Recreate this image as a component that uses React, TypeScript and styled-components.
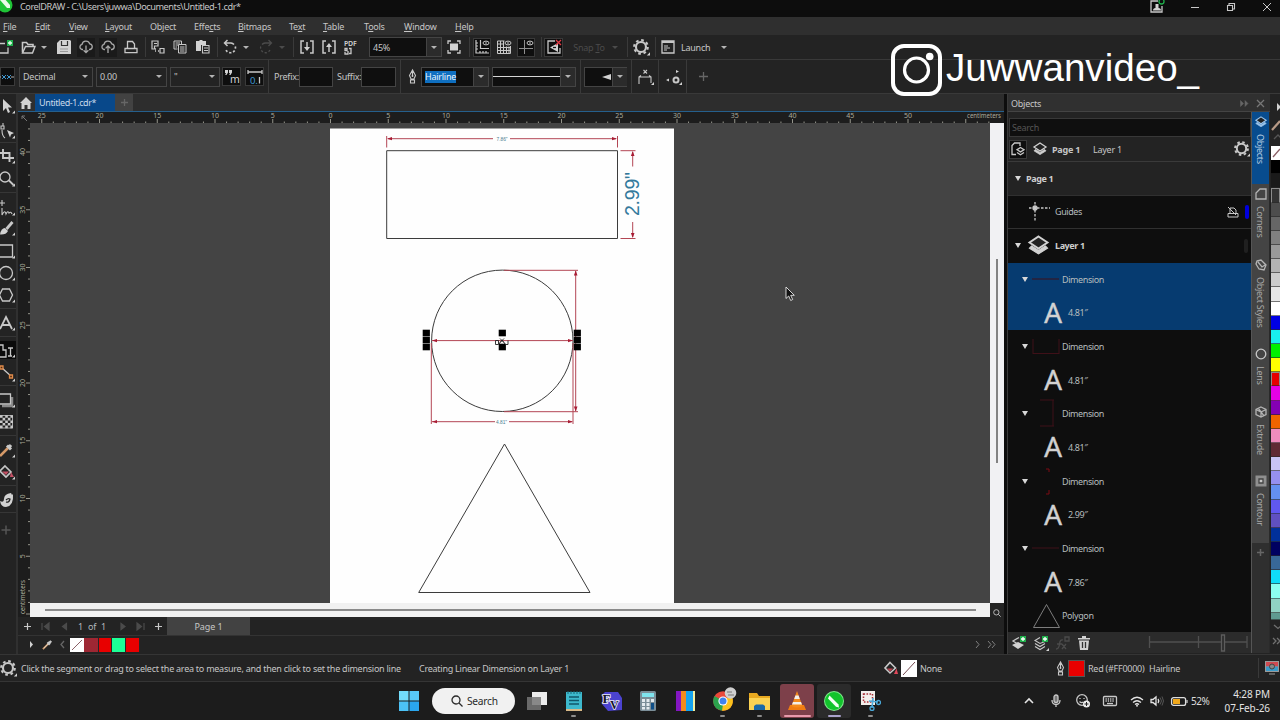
import React from 'react';
import styled, { createGlobalStyle, css } from 'styled-components';

const GlobalStyle = createGlobalStyle`
  * {
    box-sizing: border-box;
  }

  body {
    margin: 0;
    background: #1c1c1c;
    overflow: hidden;
  }
`;

const ui = `'Noto Sans', 'Open Sans', sans-serif`;

const Screen = styled.div`
  position: relative;
  width: 1280px;
  height: 720px;
  overflow: hidden;
  display: flex;
  flex-direction: column;
  background: #232323;
  color: #c6c6c6;
  font-family: ${ui};
  font-size: 9px;
  letter-spacing: -0.25px;
  line-height: 1;
  white-space: nowrap;
`;

const Icon = styled.svg<{ $dim?: boolean }>`
  display: block;
  flex-shrink: 0;
  fill: none;
  stroke: ${({ $dim }) => ($dim ? '#4b4b4b' : '#c8c8c8')};
  stroke-width: 1.3;
  overflow: visible;

  .f {
    fill: ${({ $dim }) => ($dim ? '#4b4b4b' : '#d2d2d2')};
    stroke: none;
  }
`;

/* ---------- title and menu ---------- */

const TitleBar = styled.div`
  height: 17px;
  flex-shrink: 0;
  display: flex;
  align-items: center;
  padding-bottom: 4px;
  background: #0d0d0d;
  font-size: 9.2px;
  letter-spacing: -0.46px;
`;

const AppLogo = styled.svg`
  width: 13px;
  height: 13px;
  margin-right: 7px;
  flex-shrink: 0;
`;

const WindowButtons = styled.div`
  display: flex;
  align-items: center;
  margin-left: auto;
  gap: 28px;
  padding-right: 9px;
`;

const MenuBar = styled.div`
  height: 18px;
  flex-shrink: 0;
  display: flex;
  align-items: center;
  padding: 1px 0 0 3px;
  background: #2f2f2f;
`;

const MenuItem = styled.div<{ $w: number }>`
  width: ${({ $w }) => $w}px;

  u {
    text-underline-offset: 1px;
    text-decoration-thickness: 1px;
  }
`;

/* ---------- toolbars ---------- */

const Toolbar = styled.div<{ $h: number }>`
  height: ${({ $h }) => $h}px;
  flex-shrink: 0;
  display: flex;
  align-items: center;
  background: #232323;
  border-bottom: 1px solid #393939;
`;

const Cell = styled.div<{ $w: number; $ml?: number; $boxed?: boolean; $dim?: boolean }>`
  width: ${({ $w }) => $w}px;
  height: 19px;
  margin-left: ${({ $ml = 0 }) => $ml}px;
  flex-shrink: 0;
  display: flex;
  align-items: center;
  justify-content: center;
  color: ${({ $dim }) => ($dim ? '#4b4b4b' : '#c6c6c6')};
  ${({ $boxed }) => $boxed && css`
    background: #0e0e0e;
    border: 1px solid #3a3a3a;
  `}
`;

const CloudCell = styled(Cell)`
  background: #1a1a1a;
`;

const Separator = styled.i<{ $ml: number; $h?: number }>`
  width: 1px;
  height: ${({ $h = 20 }) => $h}px;
  margin-left: ${({ $ml }) => $ml}px;
  flex-shrink: 0;
  background: #3a3a3a;
`;

const Caret = styled.i<{ $dim?: boolean }>`
  border: 3px solid transparent;
  border-top: 3.5px solid ${({ $dim }) => ($dim ? '#4b4b4b' : '#b4b4b4')};
  border-bottom: 0;
`;

const Label = styled.span<{ $ml?: number; $w?: number }>`
  width: ${({ $w }) => ($w ? `${$w}px` : 'auto')};
  margin-left: ${({ $ml = 0 }) => $ml}px;
  flex-shrink: 0;
`;

const Field = styled.div<{ $w: number; $ml?: number; $dark?: boolean }>`
  width: ${({ $w }) => $w}px;
  height: 20px;
  margin-left: ${({ $ml = 0 }) => $ml}px;
  flex-shrink: 0;
  display: flex;
  align-items: center;
  padding-left: 3px;
  border: 1px solid #444;
  background: ${({ $dark }) => ($dark ? '#0f0f0f' : '#232323')};
`;

const FieldCaret = styled.span<{ $boxed?: boolean }>`
  width: 15px;
  height: 100%;
  margin-left: auto;
  flex-shrink: 0;
  display: flex;
  align-items: center;
  justify-content: center;
  background: ${({ $boxed }) => ($boxed ? '#2b2b2b' : 'transparent')};
  border-left: ${({ $boxed }) => ($boxed ? '1px solid #444' : '0')};
`;

const Selected = styled.span`
  height: 12px;
  line-height: 11px;
  background: #0f6fc0;
  color: #e8f2fb;
`;

const LineSample = styled.span`
  flex: 1;
  height: 1px;
  margin-left: -3px;
  background: #d5d5d5;
`;

/* ---------- workspace ---------- */

const Workspace = styled.div`
  height: 560px;
  flex-shrink: 0;
  display: flex;
`;

const Toolbox = styled.div`
  width: 18px;
  flex-shrink: 0;
  display: flex;
  flex-direction: column;
  border-right: 2px solid #303030;
`;

const Tool = styled.div<{ $mt?: number; $active?: boolean }>`
  height: 18px;
  margin-top: ${({ $mt = 0 }) => $mt}px;
  flex-shrink: 0;
  background: ${({ $active }) => ($active ? '#0b0b0b' : 'transparent')};
`;

const ToolRule = styled.i<{ $mt?: number }>`
  height: 1px;
  margin-top: ${({ $mt = 0 }) => $mt}px;
  flex-shrink: 0;
  background: #363636;
`;

const Document = styled.div`
  width: 986px;
  flex-shrink: 0;
  display: flex;
  flex-direction: column;
`;

const TabStrip = styled.div`
  height: 18px;
  flex-shrink: 0;
  display: flex;
  align-items: center;
  background: #2d2d2d;
  border-bottom: 1px solid #255f8c;
`;

const DocTab = styled.div<{ $w: number; $bg: string }>`
  width: ${({ $w }) => $w}px;
  height: 17px;
  display: flex;
  align-items: center;
  justify-content: center;
  background: ${({ $bg }) => $bg};
  color: #c9d9ea;
  letter-spacing: -0.38px;
`;

const CanvasGrid = styled.div`
  display: grid;
  grid-template: 11px 480px 14px / 12px 960px 14px;
`;

const Ruler = styled.svg`
  display: block;
  overflow: visible;
  background: #1d1d1d;
  font-family: ${ui};
  font-size: 7px;
  letter-spacing: 0;
  fill: #aaaa9c;
`;

const TopRuler = styled(Ruler)`
  grid-column: 1 / 4;
`;

const Canvas = styled.svg`
  display: block;
  background: #444;
  font-family: 'Liberation Sans', Arial, sans-serif;
  letter-spacing: 0;
`;

const ScrollY = styled.div`
  padding: 136px 6px 0;
  background: #f1f1f3;

  i {
    display: block;
    height: 204px;
    width: 2px;
    background: #828282;
  }
`;

const ScrollX = styled.div`
  padding: 6px 14px 0 15px;
  background: #f1f1f1;

  i {
    display: block;
    height: 2px;
    background: #8a8a8a;
  }
`;

const PageBar = styled.div`
  height: 19px;
  flex-shrink: 0;
  display: flex;
  align-items: center;
  border-bottom: 1px solid #333;
`;

const PageCount = styled.span`
  width: 36px;
  margin-left: 2px;
  flex-shrink: 0;
  display: flex;
  justify-content: space-between;
  padding: 0 2px 0 6px;
  color: #b3b9bd;
`;

const PageTab = styled.div`
  width: 83px;
  height: 18px;
  margin-left: 3px;
  display: flex;
  align-items: center;
  justify-content: center;
  background: #424242;
  letter-spacing: -0.1px;
`;

const DocPalette = styled.div`
  height: 17px;
  flex-shrink: 0;
  display: flex;
  align-items: center;
`;

const Swatch = styled.i<{ $bg: string; $w?: number }>`
  width: ${({ $w = 14 }) => $w}px;
  height: 14px;
  margin-top: 1px;
  background: ${({ $bg }) => $bg};
  border-right: 1px solid #262626;
`;

/* ---------- docker ---------- */

const Splitter = styled.div`
  width: 4px;
  flex-shrink: 0;
  background: #0d0d0d;
  border-right: 1px solid #3a3a3a;
`;

const DockerArea = styled.div`
  width: 262px;
  flex-shrink: 0;
  display: flex;
  flex-direction: column;
`;

const DockerHeader = styled.div`
  height: 18px;
  flex-shrink: 0;
  display: flex;
  align-items: center;
  padding: 2px 5px 0 3px;
  background: #303030;
  border-bottom: 1px solid #444;
`;

const DockerBody = styled.div`
  display: flex;
  height: 541px;
`;

const Docker = styled.div`
  width: 243px;
  display: flex;
  flex-direction: column;
`;

const SearchField = styled.div`
  height: 19px;
  margin: 6px 0 0 1px;
  flex-shrink: 0;
  padding: 4px 0 0 2px;
  background: #0f0f0f;
  border: 1px solid #383838;
  color: #555;
`;

const Crumbs = styled.div`
  height: 25px;
  flex-shrink: 0;
  display: flex;
  align-items: center;
  border-bottom: 1px solid #3a3a3a;

  b {
    width: 41px;
    margin-left: 5px;
  }
`;

const Tree = styled.div`
  height: 470px;
  flex-shrink: 0;
  overflow: hidden;
  background: #0e0e0e;
  letter-spacing: -0.4px;
`;

const TreeRow = styled.div<{ $indent: number; $bg?: string; $rule?: boolean }>`
  height: 33.65px;
  display: flex;
  align-items: center;
  padding-left: ${({ $indent }) => $indent}px;
  background: ${({ $bg }) => $bg || 'transparent'};
  border-bottom: 1px solid ${({ $rule }) => ($rule ? '#303030' : 'transparent')};
  color: #b6bdbe;

  b {
    color: #cfcfcf;
  }
`;

const Twist = styled.i`
  border: 3.2px solid transparent;
  border-top: 5px solid #d8d8d8;
  border-bottom: 0;
`;

const Letter = styled.span`
  width: 20px;
  margin: -2px 5px 0 -1px;
  text-align: center;
  font-family: 'Open Sans', sans-serif;
  font-size: 28px;
  line-height: 32px;
  color: #d2d2d2;
  -webkit-text-stroke: 0.5px #d2d2d2;
`;

const ColorMark = styled.i<{ $bg: string }>`
  width: 4px;
  height: 14px;
  border-radius: 2px;
  background: ${({ $bg }) => $bg};
`;

const DockerFooter = styled.div`
  flex: 1;
  display: flex;
  align-items: center;
  padding-left: 3px;
  background: #2b2b2b;
`;

const DockerTabs = styled.div`
  width: 19px;
  display: flex;
  flex-direction: column;
  background: #2f2f2f;
  border-left: 1px solid #555;
  border-right: 1px solid #2a2a2a;
`;

const DockerTab = styled.div<{ $h: number; $top?: number; $active?: boolean }>`
  height: ${({ $h }) => $h}px;
  padding-top: ${({ $top = 5 }) => $top}px;
  flex-shrink: 0;
  display: flex;
  flex-direction: column;
  align-items: center;
  gap: 6px;
  background: ${({ $active }) => ($active ? '#084c8e' : '#444')};
  color: ${({ $active }) => ($active ? '#b5cce2' : '#a9a9a9')};

  span {
    writing-mode: vertical-rl;
    letter-spacing: -0.3px;
  }
`;

const Palette = styled.div`
  width: 10px;
  flex: 1;
  display: flex;
  flex-direction: column;
  overflow: hidden;
  padding-left: 1px;
`;

const PaletteHead = styled.div`
  height: 52px;
  flex-shrink: 0;
`;

const PaletteCell = styled.i<{ $bg: string; $outlined?: boolean; $h?: number }>`
  height: ${({ $h = 14.15 }) => $h}px;
  flex-shrink: 0;
  background: ${({ $bg }) => $bg};
  border: ${({ $outlined }) => ($outlined ? '1px solid #8c8c8c' : '0')};
  border-bottom: 1px solid rgba(40, 40, 40, 0.6);
`;

/* ---------- status and taskbar ---------- */

const StatusBar = styled.div`
  height: 28px;
  flex-shrink: 0;
  display: flex;
  align-items: center;
  border-top: 1px solid #353535;
  border-bottom: 1px solid #353535;
`;

const Chip = styled.i<{ $bg: string; $ml: number }>`
  width: 17px;
  height: 17px;
  margin-left: ${({ $ml }) => $ml}px;
  background: ${({ $bg }) => $bg};
  border: 1px solid #555;
`;

const Taskbar = styled.div`
  height: 38px;
  flex-shrink: 0;
  display: flex;
  align-items: center;
  background: #1c1c1c;
`;

const SearchPill = styled.div`
  width: 83px;
  height: 26px;
  margin-left: 13px;
  flex-shrink: 0;
  display: flex;
  align-items: center;
  gap: 4px;
  padding-left: 19px;
  border-radius: 13px;
  background: #f1f1f1;
  color: #2a2a2a;
  font-size: 10.2px;
`;

const AppSlot = styled.div<{ $w: number; $bg?: string; $mark?: string; $markW?: number }>`
  width: ${({ $w }) => $w}px;
  height: 34px;
  flex-shrink: 0;
  display: flex;
  flex-direction: column;
  align-items: center;
  justify-content: flex-end;
  border-radius: 3px;
  background: ${({ $bg }) => $bg || 'transparent'};

  &::after {
    content: '';
    width: ${({ $markW = 5 }) => $markW}px;
    height: 2px;
    margin: 4px 0 1px;
    border-radius: 1px;
    background: ${({ $mark }) => $mark || 'transparent'};
  }
`;

const Battery = styled.span`
  margin-left: 3px;
  font-size: 10px;
  letter-spacing: -0.5px;
  color: #dcdcdc;
`;

const Clock = styled.div`
  margin-left: auto;
  padding: 1px 10px 0 0;
  font-size: 10px;
  letter-spacing: -0.1px;
  line-height: 13.5px;
  text-align: right;
  color: #e4e4e4;
`;

const Watermark = styled.div`
  position: absolute;
  left: 891px;
  top: 44px;
  display: flex;
  align-items: center;
  gap: 4px;
  color: #fff;
  font-family: 'Liberation Sans', Arial, sans-serif;
  font-size: 38.6px;
  letter-spacing: 0;
  line-height: 46px;

  span {
    margin-top: -4px;
  }
`;

const menus: [string, string, string, number][] = [
  ['', 'F', 'ile', 32],
  ['', 'E', 'dit', 34],
  ['', 'V', 'iew', 36],
  ['', 'L', 'ayout', 45],
  ['Ob', 'j', 'ect', 44],
  ['Effe', 'c', 'ts', 44],
  ['', 'B', 'itmaps', 51],
  ['Te', 'x', 't', 34],
  ['', 'T', 'able', 41],
  ['T', 'o', 'ols', 40],
  ['', 'W', 'indow', 51],
  ['', 'H', 'elp', 30],
];

const paletteColors = [
  '#000000', '#1a1a1a', '#333333', '#4d4d4d', '#666666', '#808080', '#999999', '#b3b3b3',
  '#cccccc', '#e6e6e6', '#ffffff', '#0000e6', '#19f0f0', '#00f000', '#ffff00', '#e60000',
  '#e600e6', '#8400b4', '#f06400', '#f08cbe', '#5f2a34', '#c8c4f5', '#9690f0', '#6490f0',
  '#6058f0', '#6050c0', '#00309a', '#000060', '#386898', '#10dcf8', '#8cfff0', '#90d2c4',
];

// The corner mark that tells a button opens a flyout
const Flyout = ({ x = 13, y = 13 }) => <path className="f" d={`M${x + 3} ${y}v3h-3z`} />;

const Gear = ({ size = 16 }) => (
  <Icon width={size} height={size} viewBox="0 0 16 16">
    <circle cx="7.5" cy="7.5" r="4.7" strokeWidth="2" />
    <circle cx="7.5" cy="7.5" r="6.4" strokeWidth="2" strokeDasharray="2.5 2.527" />
    <Flyout x={13} y={12.5} />
  </Icon>
);

const Layers = ({ size = 14, color = '#d2d2d2' }) => (
  <Icon width={size} height={size} viewBox="0 0 14 14">
    <path d="M1 8.8 7 12.6 13 8.8 11.6 7.4 7 10.4 2.4 7.4z" style={{ fill: color, stroke: color }} strokeWidth=".8" />
    <path d="M7 1 13 5 7 9 1 5z" stroke={color} fill="#222" />
  </Icon>
);

const Magnifier = ({ size = 12, color = '#c8c8c8' }) => (
  <Icon width={size} height={size} viewBox="0 0 12 12">
    <circle cx="5" cy="5" r="4" stroke={color} />
    <path d="M8 8l3.5 3.5" stroke={color} />
  </Icon>
);

const Pen = () => (
  <Icon width="9" height="15" viewBox="0 0 9 15">
    <path d="M4.5 1 1.5 6.5 3 10h3l1.5-3.5zM4.5 1.5v5.5M2.5 11h4v3h-4z" strokeWidth="1.1" />
    <circle cx="4.5" cy="7" r=".9" className="f" />
  </Icon>
);

const Dropper = ({ size = 12 }) => (
  <Icon width={size} height={size} viewBox="0 0 12 12">
    <path d="M1 11 7 5" stroke="#c9976a" strokeWidth="2" />
    <path d="M2 10 7 5" stroke="#e8ddd0" strokeWidth=".8" />
    <path d="M6 3.5 8.6 6.2M8 4.3 10 2.2" strokeWidth="2.6" />
  </Icon>
);

const Bucket = ({ size = 14 }) => (
  <Icon width={size} height={size} viewBox="0 0 14 14">
    <path d="M6 1.5 11.5 7 6 12 1 7z" strokeWidth="1.6" />
    <path d="M3 7.5h6L6 10.5z" fill="#c0404f" stroke="none" />
    <path d="M12.5 7.500l1.500 5.500h-4z" fill="#e0485a" stroke="none" />
  </Icon>
);

const CorelBall = ({ size = 20 }) => (
  <svg width={size} height={size} viewBox="0 0 20 20">
    <circle cx="10" cy="10" r="10" fill="#7fe88c" />
    <circle cx="10" cy="10" r="9" fill="#12c42c" />
    <path d="M5.5 4.5 14.5 13.5l.5 3-3-.8L4 7.5z" fill="#f4fff4" />
  </svg>
);

const Cloud = ({ up = false }) => (
  <Icon width="14" height="14" viewBox="0 0 14 14">
    <path d="M4 9.500H3A2.600 2.600 0 0 1 3 4.400 4 4 0 0 1 10.700 3.800 2.900 2.900 0 0 1 11 9.500H10" stroke="#a8a8a8" />
    <path d={up ? 'M7 13V6M4.6 8.4 7 6l2.4 2.4' : 'M7 5.5v7M4.6 10.3 7 12.7l2.4-2.4'} stroke="#a8a8a8" />
  </Icon>
);

const Eye = () => (
  <>
    <ellipse cx="11" cy="3" rx="3" ry="1.9" strokeWidth="1" />
    <circle cx="11" cy="3" r=".8" className="f" />
  </>
);

const StandardBar = () => (
  <Toolbar $h={25}>
    <Cell $w={14}>
      <Icon width="14" height="16" viewBox="0 0 14 16">
        <path d="M-1 4.500H5M8 8.500v5.500H-1" />
        <path d="M7 1h6v6H7z" fill="#1fb04b" stroke="none" />
        <path d="M10 2v4M8 4H12" stroke="#eafff0" />
      </Icon>
    </Cell>
    <Cell $w={16} $ml={6}>
      <Icon width="15" height="13" viewBox="0 0 15 13">
        <path d="M1.5 11.5V1.5h4l1.5 2h5v2" strokeWidth="1.6" />
        <path d="M1.5 12 4.5 5.5H14L11.5 12z" strokeWidth="1.4" />
      </Icon>
    </Cell>
    <Cell $w={8} $ml={4}><Caret /></Cell>
    <Cell $w={18} $ml={7}>
      <Icon width="14" height="14" viewBox="0 0 14 14">
        <path className="f" d="M3 0h10l1 1v13H0V3z" />
        <path d="M4.500 1v4.500h6V1" stroke="#333" strokeWidth="1.200" />
        <path d="M3 9h8M3 11.500h8" stroke="#999" strokeWidth="1" />
      </Icon>
    </Cell>
    <CloudCell $w={18} $ml={4}><Cloud /></CloudCell>
    <CloudCell $w={18} $ml={4}><Cloud up /></CloudCell>
    <Cell $w={20} $ml={4}>
      <Icon width="14" height="14" viewBox="0 0 14 14">
        <path d="M3.5 8V1.5h5L10.5 4v4M1 8.5h12v4.2H1zM3 8 1 9M11 8l2 1" />
      </Icon>
    </Cell>
    <Separator $ml={4} />
    <Cell $w={18} $ml={3}>
      <Icon width="14" height="14" viewBox="0 0 14 14">
        <path d="M1 1h6v5H3.5v3H1zM3 3.5h3M9 8.5h4V13H9z" strokeWidth="1.2" />
        <path d="M4 11h1M7 11h1M4 9h1" />
      </Icon>
    </Cell>
    <Cell $w={18} $ml={4}>
      <Icon width="14" height="14" viewBox="0 0 14 14">
        <path
          d="M4.5 9H1V1h7.5v3M2.5 3H7M2.5 5H5M2.5 7H4M5.5 4.5H13V13H5.5zM7 7h4.500M7 9h4.500M7 11h4.500"
          strokeWidth="1"
        />
      </Icon>
    </Cell>
    <Cell $w={18} $ml={5}>
      <Icon width="14" height="14" viewBox="0 0 14 14">
        <path className="f" d="M0 1h3l1-1h2l1 1h3v4H5v6H0z" />
        <path d="M6.5 5.5H13V13H6.5zM8 8h4M8 10.500h4" strokeWidth="1.1" />
      </Icon>
    </Cell>
    <Separator $ml={5} />
    <Cell $w={18} $ml={3}>
      <Icon width="14" height="14" viewBox="0 0 14 14">
        <path d="M4.500 0 1.500 3l3 3M1.500 3H8a5 5 0 0 1 3 1.500" strokeWidth="1.500" />
        <path d="M12.300 6.500A5 5 0 0 1 3 10" strokeDasharray="2.200 1.800" strokeWidth="1.700" />
      </Icon>
    </Cell>
    <Cell $w={8} $ml={3}><Caret /></Cell>
    <Cell $w={18} $ml={7}>
      <Icon $dim width="14" height="14" viewBox="0 0 14 14">
        <path d="M9.5 0 12.5 3l-3 3M12.5 3H6A5 5 0 0 0 3 4.5" />
        <path d="M1.700 6.500A5 5 0 0 0 11 10" strokeDasharray="2.200 1.800" />
      </Icon>
    </Cell>
    <Cell $w={8} $ml={3}><Caret $dim /></Cell>
    <Separator $ml={7} />
    <Cell $w={18} $ml={4}>
      <Icon width="14" height="14" viewBox="0 0 14 14">
        <path d="M4 1H1v12h3M10 1h3v12h-3M7 2v6" strokeWidth="1.500" />
        <path className="f" d="M4 7h6l-3 4z" />
      </Icon>
    </Cell>
    <Cell $w={18} $ml={4}>
      <Icon width="14" height="14" viewBox="0 0 14 14">
        <path d="M4 1H1v12h3M10 1h3v12h-3M7 12V6" strokeWidth="1.500" />
        <path className="f" d="M4 7h6L7 3z" />
      </Icon>
    </Cell>
    <Cell $w={20} $ml={3}>
      <Icon width="15" height="15" viewBox="0 0 15 15">
        <text className="f" x="0" y="6" fontSize="7" fontWeight="600">PDF</text>
        <path d="M1 8.500h2v2H1zM5 8.500h2v5H5M1 12v2h3v-3" strokeWidth="1.300" />
      </Icon>
    </Cell>
    <Field $w={73} $ml={8} $dark>
      45%<FieldCaret $boxed><Caret /></FieldCaret>
    </Field>
    <Cell $w={18} $ml={3}>
      <Icon width="14" height="14" viewBox="0 0 14 14">
        <path d="M1 4V1h3M10 1h3v3M13 10v3h-3M4 13H1v-3" />
        <path className="f" d="M3 3.500h8v7H3z" />
      </Icon>
    </Cell>
    <Separator $ml={6} />
    <Cell $w={18} $ml={3} $boxed>
      <Icon width="14" height="14" viewBox="0 0 14 14">
        <path d="M1 0v13h13M5.500 0v8.500H14M1 3h2M1 6h2M1 9h2M5 13v-2M8 13v-2M11 13v-2" strokeWidth="1.200" />
        <Eye />
      </Icon>
    </Cell>
    <Cell $w={18} $ml={4}>
      <Icon width="14" height="14" viewBox="0 0 14 14">
        <path
          d="M.5 13.500V1h7M.5 13.500h13V6M3.500 1v12M6.500 1v12M9.500 6.500v7M12 6.500v7M.5 4h6M.5 7.500H13M.5 10.500H13"
          strokeWidth="1"
        />
        <Eye />
      </Icon>
    </Cell>
    <Cell $w={18} $ml={4} $boxed>
      <Icon width="14" height="14" viewBox="0 0 14 14">
        <path d="M0 8.500h14M5.500 0v14" strokeWidth="1" stroke="#8e8e8e" />
        <Eye />
      </Icon>
    </Cell>
    <Separator $ml={6} />
    <Cell $w={19} $ml={2} $boxed>
      <Icon width="14" height="14" viewBox="0 0 14 14">
        <path d="M8 1H1v12h12V8" />
        <path className="f" d="M3 7.500 11 3v9z" />
        <path d="M6 7.500h3" stroke="#111" />
        <path d="M9 0l5 5M14 0 9 5" stroke="#e03a45" />
      </Icon>
    </Cell>
    <Cell $w={34} $ml={9} $dim><span>Snap <u>T</u>o</span></Cell>
    <Cell $w={8} $ml={5}><Caret $dim /></Cell>
    <Separator $ml={8} />
    <Cell $w={18} $ml={4}><Gear size={17} /></Cell>
    <Separator $ml={5} />
    <Cell $w={16} $ml={4}>
      <Icon width="14" height="14" viewBox="0 0 14 14">
        <path d="M1 1h12v12H1z" />
        <path d="M1 2h12" strokeWidth="2" />
        <path d="M3 6h4M3 8h6M3 10h3" strokeWidth="1.200" />
      </Icon>
    </Cell>
    <Label $ml={5} $w={30}>Launch</Label>
    <Cell $w={8} $ml={9}><Caret /></Cell>
  </Toolbar>
);

const PropertyBar = () => (
  <Toolbar $h={34}>
    <Cell $w={15} $boxed>
      <Icon width="15" height="8" viewBox="0 0 15 8">
        <path d="M2 2l4 4M6 2 2 6M7 2l4 4M11 2 7 6" stroke="#3f97d0" strokeWidth="1" />
        <path d="M-1 4h2M11 4h3" strokeWidth=".9" />
      </Icon>
    </Cell>
    <Field $w={74} $ml={4}>Decimal<FieldCaret><Caret /></FieldCaret></Field>
    <Field $w={71} $ml={3}>0.00<FieldCaret><Caret /></FieldCaret></Field>
    <Field $w={50} $ml={3}>"<FieldCaret><Caret /></FieldCaret></Field>
    <Cell $w={19} $ml={2} $boxed>
      <Icon width="16" height="16" viewBox="0 0 16 16">
        <path className="f" d="M1 1h3v2.500L2.500 6H1.200L2 4H1zM5 1h3v2.500L6.500 6H5.200L6 4H5z" />
        <text className="f" x="6" y="14" fontSize="10.500">m</text>
      </Icon>
    </Cell>
    <Cell $w={19} $ml={4} $boxed>
      <Icon width="16" height="16" viewBox="0 0 16 16">
        <path d="M1 1v4M15 1v4M1 3h14" />
        <text x="3" y="14.500" fontSize="9.500" style={{ fill: '#3f97d0', stroke: 'none' }}>0.</text>
        <path d="M12.500 8v6.500" />
      </Icon>
    </Cell>
    <Separator $ml={4} $h={33} />
    <Label $ml={5} $w={24}>Prefix:</Label>
    <Field $w={34} $ml={1} $dark />
    <Label $ml={4} $w={24}>Suffix:</Label>
    <Field $w={35} $dark />
    <Separator $ml={4} $h={33} />
    <Cell $w={16} $ml={3}><Pen /></Cell>
    <Field $w={68} $ml={1} $dark>
      <Selected>Hairline</Selected>
      <FieldCaret $boxed><Caret /></FieldCaret>
    </Field>
    <Field $w={84} $ml={3} $dark>
      <LineSample />
      <FieldCaret $boxed><Caret /></FieldCaret>
    </Field>
    <Separator $ml={4} $h={33} />
    <Field $w={43} $ml={3} $dark>
      <Icon width="24" height="6" viewBox="0 0 24 6"><path className="f" d="M14 3 23 0v6z" /></Icon>
      <FieldCaret $boxed><Caret /></FieldCaret>
    </Field>
    <Separator $ml={4} $h={33} />
    <Cell $w={19} $ml={4}>
      <Icon width="16" height="16" viewBox="0 0 16 16">
        <path d="M5.500 1l3.500 3.500M9 1 5.500 4.500M1 15V8h12v6M1 8l2-1.500M13 8l-2-1.500" strokeWidth="1.100" />
        <Flyout x={13} y={13} />
      </Icon>
    </Cell>
    <Separator $ml={3} $h={33} />
    <Cell $w={19} $ml={5}>
      <Icon width="16" height="16" viewBox="0 0 16 16">
        <path className="f" d="M10 1l3 1.500L10 4zM0 11l3-1.500v3z" />
        <circle cx="10" cy="11" r="2.500" strokeWidth="2" />
        <Flyout x={13} y={13} />
      </Icon>
    </Cell>
    <Separator $ml={3} $h={33} />
    <Cell $w={11} $ml={11}>
      <Icon $dim width="9" height="9" viewBox="0 0 9 9">
        <path d="M4.500 0v9M0 4.500h9" stroke="#666" strokeWidth="1.300" />
      </Icon>
    </Cell>
  </Toolbar>
);

const ToolIcon = ({ children, mt, active, fly = true }: {
  children: React.ReactNode; mt?: number; active?: boolean; fly?: boolean;
}) => (
  <Tool $mt={mt} $active={active}>
    <Icon width="16" height="18" viewBox="0 0 16 18">
      {children}
      {fly && <Flyout x={12} y={13.5} />}
    </Icon>
  </Tool>
);

const ToolboxPanel = () => (
  <Toolbox>
    <ToolIcon mt={3}><path className="f" d="M3 2v12l3-3 2 5 2-1-2-4.500h4z" /></ToolIcon>
    <ToolIcon mt={7}>
      <path d="M3 1v3M1 4h3v3H1zM2 8q0 6 3 8" strokeWidth="1.100" />
      <path className="f" d="M7 8l7 3-3 1.500-1 3z" />
    </ToolIcon>
    <ToolRule $mt={2} />
    <ToolIcon mt={4}><path d="M3 2v9h11M0 6h9.500v9" strokeWidth="1.900" /></ToolIcon>
    <ToolIcon mt={5}><circle cx="5" cy="7" r="5" /><path d="M9 10.500l4.500 4.500" strokeWidth="1.800" /></ToolIcon>
    <ToolRule $mt={4} />
    <ToolIcon mt={6}>
      <path d="M2 1v6M-1 4h6M2 9v7q3-6 4-1 2-4 3-1 2-2 3 1" strokeWidth="1.100" />
    </ToolIcon>
    <ToolIcon mt={2}>
      <path d="M6.500 10 12.500 3" strokeWidth="2.800" />
      <path className="f" d="M0 15.500q1-6.500 5-6.500l3 3q-2 4-8 3.500z" />
    </ToolIcon>
    <ToolIcon mt={5}><path d="M-1 3h13.500v12H-1z" /></ToolIcon>
    <ToolIcon mt={4}><circle cx="6" cy="9" r="6.500" /></ToolIcon>
    <ToolIcon mt={4}><path d="M2.500 3h7l3 6-3 6h-7l-3-6z" /></ToolIcon>
    <ToolRule $mt={4} />
    <ToolIcon mt={5}><path d="M0 15 6 3l6 12M2.300 11h7.400" strokeWidth="1.800" /></ToolIcon>
    <ToolRule $mt={4} />
    <ToolIcon mt={4} active>
      <path d="M-1 4h4v5h3v7H-1M8 7h5M10.500 7v8M8 15h4" />
    </ToolIcon>
    <ToolIcon mt={6}>
      <path d="M2 3l10 9" />
      <path d="M0 1h3v3H0zM9.500 10h3v3h-3z" stroke="#e08a4a" fill="#4a2c15" />
    </ToolIcon>
    <ToolRule $mt={2} />
    <ToolIcon mt={5}>
      <path d="M12 6v9H2" stroke="#8a8a8a" strokeWidth="2.500" />
      <path d="M-1 3h11.500v10H-1z" fill="#232323" />
    </ToolIcon>
    <ToolIcon mt={4} fly={false}>
      <path
        d="M0 3.500h13M2.600 6.100h10.400M0 8.700h13M2.600 11.300h10.400M0 13.900h13"
        strokeWidth="2.600"
        strokeDasharray="2.600 2.600"
      />
      <path d="M0 2.500h12.500v12.500H0" strokeWidth=".8" />
    </ToolIcon>
    <ToolRule $mt={4} />
    <ToolIcon mt={5}>
      <path d="M0 15 8 7" stroke="#d69a68" strokeWidth="2.500" />
      <path d="M7 4.500l4 4M9 6.500l2-2.500" strokeWidth="3" />
    </ToolIcon>
    <ToolIcon mt={4}>
      <path d="M5 3l6 6-5 5-6-6z" strokeWidth="1.700" />
      <path d="M2 8.500h7L6 12z" fill="#c45064" stroke="none" />
      <path d="M11 9l3 5h-4z" fill="#c45064" stroke="none" />
    </ToolIcon>
    <ToolRule $mt={4} />
    <ToolIcon mt={4} fly={false}>
      <path className="f" d="M0 11q4 2 4-2 0-5 7-6l1 2 1-1q1 12-7 13-5 0-6-6z" />
      <path d="M6 10q2-2 4-1-1 4-4 3" stroke="#232323" />
    </ToolIcon>
    <ToolRule $mt={4} />
    <ToolIcon mt={8} fly={false}>
      <path d="M6 4.500v9M1.500 9h9" stroke="#555" strokeWidth="1.500" />
    </ToolIcon>
  </Toolbox>
);

const CM5 = 57.75;
const ticks = (from: number, to: number) =>
  Array.from({ length: to - from }, (_, i) => from + i);

// Zero stands at x 312 of this ruler
const HorizontalRuler = () => (
  <TopRuler width="986" height="11" viewBox="0 0 986 11">
    <path d="M4 4l5 5M4 4h3M4 4v3" stroke="#777" fill="none" />
    {ticks(-25, 58).map((n) => {
      const x = 312.5 + (n * CM5) / 5;
      return <path key={n} d={`M${x} ${n % 5 ? 9.5 : 7}V11`} stroke="#96968c" />;
    })}
    {ticks(-5, 11).map((n) => (
      <text key={n} x={312.5 + n * CM5} y="6.3" textAnchor="middle">{Math.abs(n * 5)}</text>
    ))}
    <text x="949" y="6.3" textLength="34" lengthAdjust="spacingAndGlyphs">centimeters</text>
  </TopRuler>
);

const VerticalRuler = () => (
  <Ruler width="12" height="494" viewBox="0 0 12 494">
    {ticks(0, 43).map((n) => {
      const y = 491 - (n * CM5) / 5;
      return <path key={n} d={`M${n % 5 ? 10 : 8} ${y}H12`} stroke="#96968c" />;
    })}
    {ticks(1, 9).map((n) => (
      <text key={n} transform={`translate(6.5 ${491 - n * CM5}) rotate(-90)`} textAnchor="middle">
        {n * 5}
      </text>
    ))}
    <text transform="translate(6.5 491) rotate(-90)" textLength="34" lengthAdjust="spacingAndGlyphs">
      centimeters
    </text>
  </Ruler>
);

// Top left corners of the selection handles
const handles = [
  [423, 330], [423, 337], [423, 344],
  [499, 330], [499, 344],
  [574, 330], [574, 337], [574, 344],
];

const Drawing = () => (
  <Canvas width="960" height="480" viewBox="30 123 960 480">
    <path d="M330 128.500h344v480H330z" fill="#fefefe" />
    <g fill="none" stroke="#3c3c3c" strokeWidth="1">
      <path d="M386.700 150.700h230.800v87.800H386.700z" />
      <circle cx="502.300" cy="340.800" r="70.700" />
      <path d="M504.500 444 590 592.500H418.700z" />
    </g>
    <g fill="none" stroke="#b34654" strokeWidth="1">
      <path d="M386.700 136v11.500M617.500 136v11.500M388 138.700h105M510 138.700h106" />
      <path d="M620.500 150.700h15M620.500 238.500h15M632.700 152v14.500M632.700 222v15" />
      <path d="M504 270.300h74M504 411.700h74M575.700 271v140" />
      <path d="M432 340.600h141M431.300 343v81M573 343v81M432 421.700h63M509 421.700h63" />
    </g>
    <g fill="#a81c34">
      <path d="M387 138.700l5-1.600v3.200zM617 138.700l-5-1.600v3.200z" />
      <path d="M632.700 151l-1.800 5h3.600zM632.700 238l-1.800-5h3.600z" />
      <path d="M575.700 270.500l-1.800 5h3.600zM575.700 411.500l-1.800-5h3.600z" />
      <path d="M432 340.600l5-1.600v3.200zM573 340.600l-5-1.600v3.200z" />
      <path d="M432 421.700l5-1.600v3.200zM573 421.700l-5-1.600v3.200z" />
    </g>
    <g fill="#4a7d90" textAnchor="middle">
      <text x="502" y="140.500" fontSize="4.800">7.86"</text>
      <text x="501.500" y="423.500" fontSize="4.800">4.81"</text>
      <text transform="translate(639 194) rotate(-90)" fontSize="19.500" textLength="44" fill="#347a9c">2.99"</text>
    </g>
    {handles.map(([x, y]) => (
      <rect key={`${x}-${y}`} x={x - 0.3} y={y - 0.3} width="7.2" height="6.6" fill="#000" />
    ))}
    <path
      d="M495.500 340.500v4h3v-4zM508 340.500v4h-3M499 344l3-4 3 4M500 338.500l4 4M504 338.500l-4 4"
      fill="none"
      stroke="#222"
      strokeWidth=".9"
    />
    <path d="M786 287v11.500l2.700-2.500 2 4.500 2-1-2-4.200h3.600z" fill="#111" stroke="#e8e8e8" strokeWidth=".9" />
  </Canvas>
);

const Nav = ({ d, dim = true, ml = 0 }: { d: string; dim?: boolean; ml?: number }) => (
  <Cell $w={12} $ml={ml}>
    <Icon $dim={dim} width="9" height="9" viewBox="0 0 9 9">
      <path d={d} fill={dim ? '#4b4b4b' : 'none'} strokeWidth="1.2" />
    </Icon>
  </Cell>
);

const plus = 'M4.5 1v7M1 4.5h7';

const DocumentPanel = () => (
  <Document>
    <TabStrip>
      <DocTab $w={17} $bg="#2f2f2f">
        <Icon width="13" height="12" viewBox="0 0 13 12">
          <path className="f" d="M6 0 0 6h1.500v6h3V8h3v4h3V6H12z" />
        </Icon>
      </DocTab>
      <DocTab $w={80} $bg="#08488a"><Label $w={72}>Untitled-1.cdr*</Label></DocTab>
      <DocTab $w={18} $bg="#424242">
        <Icon width="9" height="9" viewBox="0 0 9 9"><path d={plus} stroke="#666" /></Icon>
      </DocTab>
    </TabStrip>
    <CanvasGrid>
      <HorizontalRuler />
      <VerticalRuler />
      <Drawing />
      <ScrollY><i /></ScrollY>
      <i />
      <ScrollX><i /></ScrollX>
      <Cell $w={14}><Magnifier size={8} /></Cell>
    </CanvasGrid>
    <PageBar>
      <Nav d={plus} dim={false} ml={3} />
      <Nav d="M1 1v7M8 1v7L3.5 4.5z" ml={6} />
      <Nav d="M6.5 1.5v6L2.5 4.5z" ml={7} />
      <PageCount><span>1</span><span>of</span><span>1</span></PageCount>
      <Nav d="M3 1.5v6L7 4.5z" ml={8} />
      <Nav d="M8 1v7M1 1v7L5.5 4.5z" ml={6} />
      <Nav d={plus} dim={false} ml={6} />
      <PageTab>Page 1</PageTab>
    </PageBar>
    <DocPalette>
      <Cell $w={12} $ml={7}>
        <Icon width="5" height="7" viewBox="0 0 5 7"><path className="f" d="M1 0v7l3-3.500z" /></Icon>
      </Cell>
      <Cell $w={14} $ml={3}><Dropper size={11} /></Cell>
      <Cell $w={12} $ml={2}>
        <Icon width="9" height="9" viewBox="0 0 9 9"><path d="M6 1 3 4.500l3 3.500" stroke="#666" /></Icon>
      </Cell>
      <Cell $w={15} $ml={1}>
        <svg width="14" height="14" viewBox="0 0 14 14">
          <path d="M0 0h14v14H0z" fill="#fff" />
          <path d="M2 12 12 2" stroke="#8a6066" />
        </svg>
      </Cell>
      <Swatch $bg="#9e2733" $w={15} />
      <Swatch $bg="#e80000" $w={13} />
      <Swatch $bg="#1cff96" />
      <Swatch $bg="#e80000" />
      <Cell $w={8} $ml={833}>
        <Icon width="5" height="7" viewBox="0 0 5 7"><path d="M1 0l3 3.500L1 7" stroke="#808080" strokeWidth="1" /></Icon>
      </Cell>
      <Cell $w={12} $ml={4}>
        <Icon width="9" height="7" viewBox="0 0 9 7">
          <path d="M1 0l3 3.500L1 7M5 0l3 3.500L5 7" stroke="#808080" strokeWidth="1" />
        </Icon>
      </Cell>
    </DocPalette>
  </Document>
);

// Small red preview of each dimension, in the order of the tree
const previews = [
  'M0 13h27',
  'M1 6v15M27 6v15M1 20.500h26',
  'M8 0h14M8 26h14M21 0v26',
  'M14 1h3v3M14 26h3v-4',
  'M0 13h27',
];
const sizes = ['4.81″', '4.81″', '4.81″', '2.99″', '7.86″'];

const TabGlyph = ({ d, fill }: { d: string; fill?: string }) => (
  <Icon width="12" height="12" viewBox="0 0 12 12"><path d={d} stroke="#b4b4b4" fill={fill} /></Icon>
);

const ObjectsDocker = () => (
  <Docker>
    <SearchField>Search</SearchField>
    <Crumbs>
      <Cell $w={18} $ml={1} $boxed>
        <Icon width="14" height="14" viewBox="0 0 14 14">
          <path d="M5 12.500H1V3.500L3.500 1H9v3" />
          <path d="M9.500 5.500l3.500 2.200-3.500 2.200L6 7.700zM6 10.500l3.500 2.200 3.500-2.200" />
        </Icon>
      </Cell>
      <Cell $w={14} $ml={6}><Layers /></Cell>
      <b>Page 1</b>
      <Label $w={141}>Layer 1</Label>
      <Gear size={16} />
    </Crumbs>
    <Tree>
      <TreeRow $indent={7} $bg="#232323" $rule>
        <Twist /><Label $ml={5}><b>Page 1</b></Label>
      </TreeRow>
      <TreeRow $indent={21} $rule>
        <Icon width="21" height="20" viewBox="0 0 21 20">
          <path d="M0 6h21M6 0v20" strokeDasharray="2.500 1.500" />
          <circle cx="6" cy="6" r="2" fill="#ccc" />
        </Icon>
        <Label $ml={5} $w={172}>Guides</Label>
        <Icon width="12" height="12" viewBox="0 0 12 12">
          <path d="M3 7V2h4l2 2v3M1 7.500h10V11H1zM1 1l8 8" strokeWidth="1" />
        </Icon>
        <Label $ml={6} /><ColorMark $bg="#0000dc" />
      </TreeRow>
      <TreeRow $indent={7}>
        <Twist />
        <Label $ml={7} /><Layers size={21} />
        <Label $ml={6} $w={189}><b>Layer 1</b></Label>
        <ColorMark $bg="#202020" />
      </TreeRow>
      {sizes.map((size, i) => (
        <React.Fragment key={i}>
          <TreeRow $indent={14} $bg={i === 0 ? '#063b70' : undefined}>
            <Twist />
            <Label $ml={4} />
            <Icon width="28" height="27" viewBox="0 0 28 27">
              <path d={previews[i]} stroke={i === 3 ? '#7c0a12' : '#3f1018'} strokeWidth="1" />
            </Icon>
            <Label $ml={2}>Dimension</Label>
          </TreeRow>
          <TreeRow $indent={36} $bg={i === 0 ? '#063b70' : undefined}>
            <Letter>A</Letter>{size}
          </TreeRow>
        </React.Fragment>
      ))}
      <TreeRow $indent={25}>
        <Icon width="27" height="24" viewBox="0 0 27 24">
          <path d="M13.500.5 26.500 23.500H.5z" stroke="#7d7d7d" strokeWidth="1" />
        </Icon>
        <Label $ml={2}>Polygon</Label>
      </TreeRow>
    </Tree>
    <DockerFooter>
      <Icon width="16" height="14" viewBox="0 0 16 14">
        <path className="f" d="M1 9l6-3 6 3-6 4z" />
        <path d="M8 1.500 2 5l4 2.500" />
        <path d="M9 0h6v6H9z" fill="#1fb04b" stroke="none" />
        <path d="M12 1v4M10 3h4" stroke="#fff" />
      </Icon>
      <Label $ml={6} />
      <Icon width="16" height="14" viewBox="0 0 16 14">
        <path d="M7 1.500 2 4.500l5 3 5-2M2 7.500l5 3 5-3M2 10.500l5 3 5-3" strokeWidth="1.100" />
        <path d="M9 0h6v6H9z" fill="#1fb04b" stroke="none" />
        <path d="M12 1v4M10 3h4" stroke="#fff" />
        <Flyout x={13} y={12} />
      </Icon>
      <Label $ml={7} />
      <Icon $dim width="14" height="14" viewBox="0 0 14 14">
        <path d="M7 4Q4 3 3.500 8T0 13M1 8h5M6 8l4 5M10 8l-4 5M9 1h4v4H9z" />
      </Icon>
      <Label $ml={8} />
      <Icon width="12" height="14" viewBox="0 0 12 14">
        <path className="f" d="M0 2h4V0h4v2h4v1.500H0zM1 4.500h10L10 14H2z" />
        <path d="M4.500 6v6M7.500 6v6" stroke="#333" />
      </Icon>
      <Label $ml={59} />
      <Icon width="99" height="18" viewBox="0 0 99 18">
        <path d="M.5 2v12M49.500 2v12M98 2v12M0 8h98" stroke="#505050" />
        <path d="M72.500 1h3v16h-3z" fill="#2b2b2b" stroke="#5c5c5c" />
      </Icon>
    </DockerFooter>
  </Docker>
);

const DockerPanel = () => (
  <DockerArea>
    <DockerHeader>
      <Label $w={229}>Objects</Label>
      <Icon width="9" height="7" viewBox="0 0 9 7">
        <path d="M.5.5v6l3-3zM5 .5v6l3-3z" stroke="#666" fill="#666" strokeWidth=".5" />
      </Icon>
      <Label $ml={8} />
      <Icon width="7" height="7" viewBox="0 0 7 7"><path d="M0 0l7 7M7 0 0 7" stroke="#777" /></Icon>
    </DockerHeader>
    <DockerBody>
      <ObjectsDocker />
      <DockerTabs>
        <DockerTab $h={72} $top={4} $active><Layers size={12} color="#9cc4ea" /><span>Objects</span></DockerTab>
        <DockerTab $h={74} $top={4}><TabGlyph d="M1 11V5l4-4h6v10z" /><span>Corners</span></DockerTab>
        <DockerTab $h={90} $top={1}>
          <TabGlyph d="M2 2l4-1 5 5-2 5-5-1-3-5zM3 3l4 5 3-2" /><span>Object Styles</span>
        </DockerTab>
        <DockerTab $h={57} $top={0}>
          <Icon width="12" height="12" viewBox="0 0 12 12"><circle cx="6" cy="6" r="4.8" /></Icon>
          <span>Lens</span>
        </DockerTab>
        <DockerTab $h={70} $top={1}>
          <TabGlyph d="M6 1l5 2.500v5L6 11 1 8.500v-5zM1 3.500l5 2.500 5-2.500M6 6v5M3 1.800l6 8" /><span>Extrude</span>
        </DockerTab>
        <DockerTab $h={68} $top={0}>
          <Icon width="12" height="12" viewBox="0 0 12 12">
            <path d="M.5.5h11v11H.5z" fill="#8f8f8f" stroke="none" />
            <path d="M4 4h4v4H4z" fill="#c8c8c8" stroke="#444" />
          </Icon>
          <span>Contour</span>
        </DockerTab>
        <Cell $w={17}>
          <Icon width="9" height="9" viewBox="0 0 9 9"><path d={plus} stroke="#666" strokeWidth="1.5" /></Icon>
        </Cell>
      </DockerTabs>
    </DockerBody>
  </DockerArea>
);

const ColorColumn = () => (
  <Palette>
    <PaletteHead>
      <Icon width="9" height="52" viewBox="0 0 9 52">
        <path className="f" d="M6 9v8l4-4z" />
        <path d="M1 36 9 27" stroke="#b89a86" strokeWidth="2.2" />
        <path d="M3 45l4-4 4 4" stroke="#555" />
      </Icon>
    </PaletteHead>
    <Icon width="9" height="14.15" viewBox="0 0 9 14.15">
      <path d="M0 0h9v14H0z" fill="#fff" stroke="none" />
      <path d="M2 11 9 3" stroke="#8a6066" />
    </Icon>
    {paletteColors.map((c, i) => (
      <PaletteCell key={i} $bg={c} $outlined={i === 2 || i === 15} />
    ))}
    <PaletteCell $bg="#5f9a90" $h={7} />
    <Icon width="9" height="34" viewBox="0 0 9 34">
      <path d="M3 5l4 3.500L11 5M2 18l3 3-3 3M6 18l3 3-3 3" stroke="#707070" />
    </Icon>
  </Palette>
);

const StatusRow = () => (
  <StatusBar>
    <Gear size={17} />
    <Label $ml={4} $w={398}>
      Click the segment or drag to select the area to measure, and then click to set the dimension line
    </Label>
    <Label $w={465}>Creating Linear Dimension on Layer 1</Label>
    <Bucket />
    <Cell $w={17} $ml={2}>
      <svg width="16" height="17" viewBox="0 0 16 17">
        <path d="M0 0h16v17H0z" fill="#fff" />
        <path d="M2 15 14 2" stroke="#74484e" />
      </svg>
    </Cell>
    <Label $ml={3} $w={136}>None</Label>
    <Pen />
    <Chip $bg="#e80000" $ml={3} />
    <Label $ml={3} $w={61}>Red (#FF0000)</Label>
    <Label $w={109}>Hairline</Label>
    <Separator $ml={0} />
    <Label $ml={6} />
    <svg width="15" height="14" viewBox="0 0 15 14">
      <path d="M0 0h14v11H0z" fill="#9a9a9a" />
      <path d="M1 1h12v4.5H1z" fill="#d04a50" />
      <path d="M1 5.5h12V10H1z" fill="#3a9ac8" />
      <circle cx="7" cy="5.5" r="2.5" fill="#888" stroke="#444" />
      <path d="M4 13h6" stroke="#9a9a9a" />
    </svg>
  </StatusBar>
);

const Apps = () => (
  <>
    <Cell $w={20} $ml={399}>
      <svg width="20" height="20" viewBox="0 0 20 20">
        <path d="M0 0h9.5v9.5H0z" fill="#72dcfb" />
        <path d="M10.5 0H20v9.5h-9.5z" fill="#58c8f8" />
        <path d="M0 10.5h9.5V20H0z" fill="#4cc2f6" />
        <path d="M10.5 10.5H20V20h-9.5z" fill="#2aa6ee" />
      </svg>
    </Cell>
    <SearchPill><Magnifier size={12} color="#2a2a2a" />Search</SearchPill>
    <Label $ml={5} />
    <AppSlot $w={34}>
      <svg width="20" height="20" viewBox="0 0 20 20">
        <path d="M5 1h15v13H5z" fill="#ececec" />
        <path d="M0 6h14v13H0z" fill="#777" opacity=".85" />
      </svg>
    </AppSlot>
    <AppSlot $w={39} $mark="#8d8d8d">
      <svg width="16" height="20" viewBox="0 0 16 20">
        <path d="M0 1h16v17H0z" fill="#3db8cc" />
        <path d="M2 0v3M5 0v3M8 0v3M11 0v3M14 0v3" stroke="#176878" strokeWidth="1" />
        <path d="M3 6h10M3 9.5h10M3 13h10" stroke="#10566a" strokeWidth="1.3" />
        <path d="M0 18h16v2H0z" fill="#d8b886" />
      </svg>
    </AppSlot>
    <AppSlot $w={36}>
      <svg width="21" height="20" viewBox="0 0 21 20">
        <path d="M4 1h13l4 6v12l-14 1-6-7V4z" fill="#4b43d0" />
        <g
          fontFamily="Liberation Serif, serif"
          fontWeight="700"
          fill="#15152a"
          stroke="#eeeef8"
          strokeWidth="1.6"
          paintOrder="stroke"
        >
          <text x="1.5" y="11.5" fontSize="13">F</text>
          <text x="9" y="17.5" fontSize="12">V</text>
        </g>
      </svg>
    </AppSlot>
    <AppSlot $w={37}>
      <svg width="16" height="20" viewBox="0 0 16 20">
        <rect width="16" height="20" rx="1.5" fill="#7b8e98" />
        <path d="M2 2h12v4H2z" fill="#7fe4ee" />
        <path
          d="M2 8h3v3H2zM6.5 8h3v3h-3zM11 8h3v3h-3zM2 12h3v3H2zM6.5 12h3v3h-3zM2 16h3v2.5H2zM6.5 16h3v2.5h-3z"
          fill="#e3eaee"
        />
        <path d="M11 12h3v6.5h-3z" fill="#0f4f88" />
      </svg>
    </AppSlot>
    <AppSlot $w={38}>
      <svg width="19" height="20" viewBox="0 0 19 20">
        <path d="M0 0h5v20H0z" fill="#8416c2" />
        <path d="M5 0h5v20H5z" fill="#f58a1c" />
        <path d="M10 0h7v20h-7z" fill="#16a3ee" />
        <path d="M17 0h2v20h-2z" fill="#f4f0a0" />
      </svg>
    </AppSlot>
    <AppSlot $w={37} $mark="#8d8d8d">
      <svg width="22" height="22" viewBox="0 0 22 22" overflow="visible">
        <circle cx="11" cy="12" r="9.8" fill="#e9483a" />
        <path d="M2.5 7A9.8 9.8 0 0 0 10 21.7L15 14z" fill="#2ba24c" />
        <path d="M10 21.7A9.8 9.8 0 0 0 20.5 9H12z" fill="#fbc21c" />
        <circle cx="11" cy="12" r="4.6" fill="#fff" />
        <circle cx="11" cy="12" r="3.5" fill="#3f82ee" />
        <circle cx="18.5" cy="4" r="5.8" fill="#cfcfcf" />
        <path d="M15 3h5M16 6h6" stroke="#777" strokeWidth="1" />
      </svg>
    </AppSlot>
    <AppSlot $w={37} $mark="#8d8d8d">
      <svg width="21" height="19" viewBox="0 0 21 19">
        <path d="M0 1h8l2 3h11v14H0z" fill="#e8a920" />
        <path d="M0 6h21v12H0z" fill="#fbd253" />
        <path d="M5 18v-4l2-1.5h7l2 1.5v4z" fill="#1b69a8" />
      </svg>
    </AppSlot>
    <Label $ml={2} />
    <AppSlot $w={34} $bg="#7d404a" $mark="#e89aac" $markW={27}>
      <svg width="18" height="20" viewBox="0 0 18 20">
        <path d="M2 14h14l2 5H0z" fill="#f07c12" />
        <path d="M9 0l5.5 15q-5.5 3-11 0z" fill="#f58a1c" />
        <path d="M7.4 4.5h3.2l1.2 3.5H6.2zM5 11h8l1 2.5H4z" fill="#f3efe9" />
      </svg>
    </AppSlot>
    <Label $ml={3} />
    <AppSlot $w={34} $bg="#2b2b2b" $mark="#aaa2cc" $markW={13}><CorelBall /></AppSlot>
    <AppSlot $w={38} $mark="#8d8d8d">
      <svg width="21" height="20" viewBox="0 0 21 20" fill="none">
        <path d="M1 0h14v14H1z" fill="#f2efec" />
        <path d="M3.5 3h9v8h-9z" stroke="#a8323a" strokeWidth="1.5" strokeDasharray="1.6 1.4" />
        <path d="M9 10l9 1M13 7l-1 10" stroke="#4aa8d8" strokeWidth="1.6" />
        <circle cx="18.5" cy="11.5" r="2" stroke="#4aa8d8" strokeWidth="1.3" />
        <circle cx="12" cy="17.5" r="2" stroke="#4aa8d8" strokeWidth="1.3" />
      </svg>
    </AppSlot>
  </>
);

const Tray = () => (
  <>
    <Cell $w={14} $ml={133}>
      <Icon width="10" height="6" viewBox="0 0 10 6"><path d="M1 5l4-4 4 4" stroke="#e4e4e4" strokeWidth="1.6" /></Icon>
    </Cell>
    <Cell $w={14} $ml={13}>
      <Icon width="10" height="14" viewBox="0 0 10 14">
        <rect x="3" y="1" width="4" height="7.5" rx="2" fill="#777" />
        <path d="M1 6q0 4.500 4 4.500T9 6M5 10.500V13" />
      </Icon>
    </Cell>
    <Cell $w={16} $ml={12}>
      <Icon width="14" height="14" viewBox="0 0 14 14">
        <circle cx="6" cy="6" r="5.3" />
        <path d="M4 4v1M8 4v1M3.500 7.500q2 2 4 .5" />
        <circle cx="10.5" cy="10" r="3.5" fill="#eee" stroke="none" />
        <path d="M10.500 8v4M8.500 10h4" stroke="#222" strokeWidth="1" />
      </Icon>
    </Cell>
    <Cell $w={16} $ml={11}>
      <Icon width="14" height="10" viewBox="0 0 14 10">
        <rect x=".5" y=".5" width="13" height="9" rx="1" />
        <path d="M2.500 3h9M2.500 5h9" strokeDasharray="1.300 1" />
        <path d="M4 7.500h6" />
      </Icon>
    </Cell>
    <Cell $w={16} $ml={11}>
      <Icon width="14" height="11" viewBox="0 0 14 11">
        <path d="M1 4q6-5.500 12 0M3 6.500q4-3.500 8 0M5 8.500q2-1.500 4 0" stroke="#e4e4e4" />
        <circle cx="7" cy="9.7" r="1" className="f" />
      </Icon>
    </Cell>
    <Cell $w={16} $ml={4}>
      <Icon width="14" height="10" viewBox="0 0 14 10">
        <path d="M1 3.500h2L6 1v8L3 6.500H1zM8 3q1.500 2 0 4" stroke="#e4e4e4" />
        <path d="M10 1.500q3 3.500 0 7M12 .5q3 4.500 0 9" stroke="#555" strokeWidth="1" />
      </Icon>
    </Cell>
    <Cell $w={17} $ml={6}>
      <Icon width="17" height="9" viewBox="0 0 17 9">
        <rect x=".6" y=".6" width="14" height="7.8" rx="2" stroke="#ddd" />
        <path d="M2 2h7v5H2z" fill="#f0a81c" stroke="none" />
        <path d="M16 3v3" />
      </Icon>
    </Cell>
    <Battery>52%</Battery>
    <Clock>4:28 PM<br />07-Feb-26</Clock>
  </>
);

function App() {
  return (
    <Screen>
      <GlobalStyle />
      <TitleBar>
        <AppLogo viewBox="3 0 13 13">
          <circle cx="8" cy="5" r="7.5" fill="#1fc436" />
          <path d="M3 0l7 8h3v-3L7-2z" fill="#eafbe9" />
        </AppLogo>
        CorelDRAW - C:\Users\juwwa\Documents\Untitled-1.cdr*
        <WindowButtons>
          <Icon width="13" height="13" viewBox="0 0 13 13">
            <path d="M8 1H1v11h11V6" />
            <path className="f" d="M3 10.500q0-2.500 2.500-2.500V4h3v4q2.500 0 2.500 2.500z" />
            <circle cx="11.5" cy="1.5" r="2.5" stroke="#1fb04b" />
          </Icon>
          <Icon width="8" height="8" viewBox="0 0 8 8"><path d="M0 4.500h8" strokeWidth="1" /></Icon>
          <Icon width="8" height="8" viewBox="0 0 8 8">
            <path d="M.5 2.500h5v5h-5zM2 2V.5h5.500V6H6" strokeWidth="1.100" />
          </Icon>
          <Icon width="8" height="8" viewBox="0 0 8 8"><path d="M0 0l8 8M8 0 0 8" strokeWidth="1" /></Icon>
        </WindowButtons>
      </TitleBar>
      <MenuBar>
        {menus.map(([pre, key, post, w]) => (
          <MenuItem key={pre + key + post} $w={w}>{pre}<u>{key}</u>{post}</MenuItem>
        ))}
      </MenuBar>
      <StandardBar />
      <PropertyBar />
      <Workspace>
        <ToolboxPanel />
        <DocumentPanel />
        <Splitter />
        <DockerPanel />
        <ColorColumn />
      </Workspace>
      <StatusRow />
      <Taskbar>
        <Apps />
        <Tray />
      </Taskbar>
      <Watermark>
        <svg width="51" height="52" viewBox="0 0 51 52" fill="none" stroke="#fff">
          <rect x="2" y="2" width="47" height="48" rx="11" strokeWidth="4" />
          <circle cx="25.5" cy="26" r="12" strokeWidth="3.2" />
          <circle cx="38.7" cy="12.5" r="3.8" fill="#fff" stroke="none" />
        </svg>
        <span>Juwwanvideo_</span>
      </Watermark>
    </Screen>
  );
}

export default App;
